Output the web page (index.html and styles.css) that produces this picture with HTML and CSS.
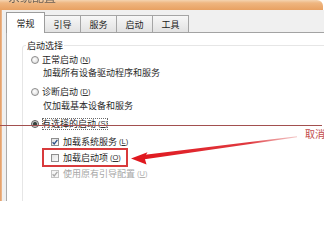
FILE: index.html
```html
<!DOCTYPE html>
<html lang="zh-CN">
<head>
<meta charset="utf-8">
<title>系统配置</title>
<link rel="stylesheet" href="styles.css">
</head>
<body>
<div class="win">
  <div class="titlebar"><span class="title">系统配置</span></div>
  <div class="frame">
    <div class="edge"></div>
    <div class="main">
      <div class="tabs">
        <div class="tab sel">常规</div>
        <div class="tab">引导</div>
        <div class="tab">服务</div>
        <div class="tab">启动</div>
        <div class="tab">工具</div>
      </div>
      <div class="panel">
        <fieldset class="group">
          <legend>启动选择</legend>
          <div class="opt"><span class="radio"></span><span>正常启动</span><span class="key">(<u>N</u>)</span></div>
          <div class="sub">加载所有设备驱动程序和服务</div>
          <div class="opt r2"><span class="radio"></span><span>诊断启动</span><span class="key">(<u>D</u>)</span></div>
          <div class="sub s2">仅加载基本设备和服务</div>
          <div class="opt r3"><span class="radio on"></span><span class="focus">有选择的启动<span class="key">(<u>S</u>)</span></span></div>
          <div class="opt chk c1"><span class="box"><svg viewBox="0 0 8 8" width="8" height="8"><path d="M1.6 4.2 L3.2 5.9 L6.4 1.8" fill="none" stroke="#2d4f86" stroke-width="1.3"/></svg></span><span>加载系统服务</span><span class="key">(<u>L</u>)</span></div>
          <div class="opt chk c2"><span class="box"></span><span>加载启动项</span><span class="key">(<u>O</u>)</span></div>
          <div class="opt chk c3 dis"><span class="box"><svg viewBox="0 0 8 8" width="8" height="8"><path d="M1.6 4.2 L3.2 5.9 L6.4 1.8" fill="none" stroke="#a8a8a8" stroke-width="1.3"/></svg></span><span>使用原有引导配置</span><span class="key">(<u>U</u>)</span></div>
        </fieldset>
      </div>
    </div>
  </div>
</div>
<div class="redline"></div>
<div class="redbox"></div>
<svg class="arrow" width="324" height="201" viewBox="0 0 324 201">
  <defs>
    <linearGradient id="tail" x1="143" y1="0" x2="297" y2="0" gradientUnits="userSpaceOnUse">
      <stop offset="0" stop-color="#e0181f"/>
      <stop offset="0.7" stop-color="#e03a40"/>
      <stop offset="1" stop-color="#e89090" stop-opacity="0.5"/>
    </linearGradient>
  </defs>
  <polygon points="143,155 297,136.3 297,137.3 143,159.6" fill="url(#tail)"/>
  <polygon points="131,158.6 147.5,152.2 144.5,157.6 146.5,164.6" fill="#e0181f"/>
</svg>
<div class="cancel">取消</div>
</body>
</html>
```

FILE: styles.css
```css
html, body {
  margin: 0;
  padding: 0;
  width: 324px;
  height: 201px;
  overflow: hidden;
  background: #fff;
}
body {
  position: relative;
  font-family: "Noto Sans CJK SC", "Noto Sans", sans-serif;
  color: #222;
}
.win {
  width: 340px;
  height: 201px;
  display: flex;
  flex-direction: column;
}
.titlebar {
  height: 10px;
  width: 323px;
  flex: none;
  overflow: hidden;
  background: linear-gradient(#f4d4b1 0, #efb680 3px, #e8a162 10px);
  border-top-right-radius: 6px;
}
.title {
  display: block;
  margin: -9px 0 0 8px;
  font-size: 12px;
  line-height: 12px;
  color: #6b6055;
  filter: blur(0.5px);
}
.frame {
  flex: 1;
  display: flex;
  background: #f0f0f0;
}
.edge {
  width: 2px;
  flex: none;
  background: linear-gradient(to right, #e29a60, #eebd95);
}
.main {
  flex: 1;
  display: flex;
  flex-direction: column;
  padding-left: 4px;
}
.tabs {
  height: 22px;
  flex: none;
  display: flex;
  align-items: flex-end;
}
.tab {
  box-sizing: border-box;
  width: 37px;
  height: 17px;
  margin-left: -1px;
  border: 1px solid #a5a5a5;
  border-bottom: none;
  background: linear-gradient(#f7f7f7, #e2e2e2);
  font-size: 9px;
  line-height: 1;
  color: #222;
  display: flex;
  align-items: center;
  justify-content: center;
}
.tab.sel {
  width: 39px;
  height: 21px;
  margin: 0 0 -1px 0;
  background: #fff;
  border-color: #9c9c9c;
  position: relative;
  z-index: 1;
}
.panel {
  flex: 1;
  background: #fff;
  border-top: 1px solid #a3a3a3;
  border-left: 1px solid #ababab;
}
.group {
  margin: 7px 0 0 15px;
  padding: 3px 0 40px 8px;
  border: 1px solid #e6e6e6;
  border-radius: 3px;
  min-width: 0;
}
.group legend {
  margin-left: -5px;
  padding: 0 1px;
  font-size: 9px;
  line-height: 11px;
  color: #1e1e1e;
}
.opt {
  display: flex;
  align-items: center;
  height: 12px;
  font-size: 9px;
  line-height: 12px;
  color: #1f1f1f;
  white-space: nowrap;
}
.sub {
  height: 12px;
  margin-top: 1px;
  padding-left: 12px;
  font-size: 9px;
  line-height: 12px;
  color: #2a2a2a;
  white-space: nowrap;
}
.r2 { margin-top: 7px; }
.s2 { margin-top: 2px; }
.r3 { margin-top: 6px; }
.chk { padding-left: 20px; }
.c1 { margin-top: 6px; }
.c2 { margin-top: 4px; }
.c3 { margin-top: 4px; }
.radio {
  width: 8px;
  height: 8px;
  box-sizing: border-box;
  flex: none;
  margin-right: 3px;
  border: 1px solid #8c8c8c;
  border-radius: 50%;
  background: radial-gradient(circle at 40% 40%, #fff, #d6d6d6);
}
.radio.on {
  border-color: #5a5a5a;
  background: radial-gradient(circle, #2f3a36 0, #3d4a45 1.6px, #bfc4c2 2.4px, #e6e6e6 3px);
}
.focus {
  outline: 1px dotted #6a6a6a;
  outline-offset: -1px;
  display: flex;
  align-items: center;
}
.box {
  width: 8px;
  height: 8px;
  box-sizing: border-box;
  flex: none;
  margin-right: 4px;
  border: 1px solid #8e8e8e;
  background: linear-gradient(135deg, #e4e4e4, #fafafa);
  display: flex;
  align-items: center;
  justify-content: center;
  overflow: hidden;
}
.box svg {
  display: block;
  flex: none;
}
.dis { color: #a6a6a6; }
.dis .box { border-color: #c4c4c4; background: #f6f6f6; }
.dis .key { color: #b0b0b0; }
.key {
  font-family: "Liberation Sans", Arial, sans-serif;
  font-size: 7.5px;
  margin-left: 2px;
  color: #333;
}
.redline {
  position: absolute;
  left: 0;
  top: 125px;
  width: 322px;
  height: 1px;
  background: #a2504f;
}
.redbox {
  position: absolute;
  left: 42px;
  top: 148px;
  width: 86px;
  height: 19px;
  box-sizing: border-box;
  border: 2px solid #d83a3c;
}
.arrow {
  position: absolute;
  left: 0;
  top: 0;
  pointer-events: none;
}
.cancel {
  position: absolute;
  left: 305px;
  top: 128px;
  font-size: 10px;
  line-height: 12px;
  color: #c24a4b;
  white-space: nowrap;
}
```
